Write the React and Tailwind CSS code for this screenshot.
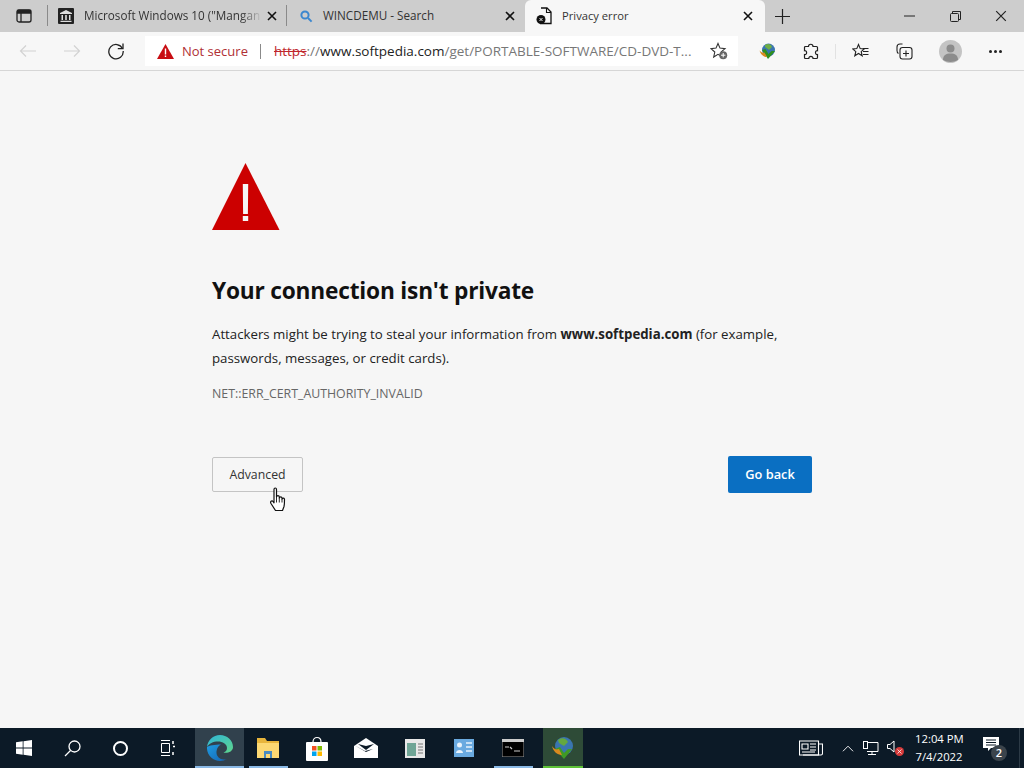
import React from "react";

const font = { fontFamily: '"Open Sans","Noto Sans",sans-serif' };

function X({ s = 10, c = "#111", w = 1.6 }) {
  return (
    <svg width={s} height={s} viewBox="0 0 10 10">
      <path d="M1 1L9 9M9 1L1 9" stroke={c} strokeWidth={w} fill="none" />
    </svg>
  );
}

function TabStrip() {
  return (
    <div className="flex h-8 bg-[#cdcdcd] shrink-0">
      <div className="w-[47px] flex items-center justify-center">
        <svg width="16" height="14" viewBox="0 0 16 14" fill="none" stroke="#222" strokeWidth="1.3">
          <rect x="1" y="1" width="14" height="12" rx="2" />
          <path d="M5 4v9" />
          <path d="M1.500 1.500h13v2.500h-13z" fill="#222" />
        </svg>
      </div>
      <div className="w-px h-[21px] bg-[#8a8a8a] mt-[5px]" />
      <div className="w-[238px] flex items-center pl-[10px] pr-[9px]">
        <svg width="16" height="16" viewBox="0 0 16 16" className="shrink-0">
          <rect width="16" height="16" rx="1" fill="#222" />
          <path d="M2 5L8 2l6 3v1H2zM3.500 7h1.500v5H3.500zM7.200 7h1.600v5H7.200zM11 7h1.500v5H11zM2.500 12.700h11v1.200h-11z" fill="#ddd" />
        </svg>
        <span className="ml-[10px] w-[178px] whitespace-nowrap text-[11.7px] text-[#333] [mask-image:linear-gradient(to_right,black_88%,transparent)]">
          Microsoft Windows 10 ("Mangan
        </span>
        <span className="ml-auto flex"><X /></span>
      </div>
      <div className="w-px h-[21px] bg-[#8a8a8a] mt-[5px]" />
      <div className="w-[238px] flex items-center pl-[11px] pr-[10px]">
        <svg width="15" height="15" viewBox="0 0 15 15" className="shrink-0 ml-[1px]" fill="none" stroke="#3b87cf" strokeWidth="2">
          <circle cx="6" cy="6" r="3.600" />
          <path d="M9 9l3.600 3.600" />
        </svg>
        <span className="ml-[9px] text-[11.7px] text-[#333] whitespace-nowrap">WINCDEMU - Search</span>
        <span className="ml-auto flex"><X /></span>
      </div>
      <div className="w-[240px] bg-[#f7f7f7] rounded-t-[6px] flex items-center pl-[11px] pr-[12px]">
        <svg width="16" height="18" viewBox="0 0 16 18" className="shrink-0">
          <path d="M5 1h6l4 4v11.500H4" fill="none" stroke="#111" strokeWidth="1.300" />
          <path d="M10.500 1v4.500H15" fill="none" stroke="#111" strokeWidth="1.100" />
          <circle cx="5" cy="12.500" r="4.500" fill="#111" />
          <path d="M3.500 11l3 3M6.500 11l-3 3" stroke="#eee" strokeWidth="1" />
        </svg>
        <span className="ml-[10px] text-[11.2px] text-[#333] whitespace-nowrap">Privacy error</span>
        <span className="ml-auto flex"><X /></span>
      </div>
      <div className="w-[34px] flex items-center justify-center">
        <svg width="15" height="15" viewBox="0 0 15 15"><path d="M7.500 0v15M0 7.500h15" stroke="#222" strokeWidth="1.200" /></svg>
      </div>
      <div className="ml-auto flex">
        <div className="w-[46px] flex items-center justify-center">
          <svg width="11" height="2" viewBox="0 0 11 2"><path d="M0 1h11" stroke="#222" strokeWidth="1" /></svg>
        </div>
        <div className="w-[46px] flex items-center justify-center">
          <svg width="11" height="11" viewBox="0 0 11 11" fill="none" stroke="#222"><rect x="0.500" y="2.500" width="8" height="8" rx="1" /><path d="M2.500 2.500V0.500h8v8H8.500" /></svg>
        </div>
        <div className="w-[46px] flex items-center justify-center">
          <X s={12} c="#222" w={1} />
        </div>
      </div>
    </div>
  );
}

function Toolbar() {
  return (
    <div className="flex items-center h-[39px] bg-[#f7f7f7] border-b border-[#d6d6d6] shrink-0">
      <div className="w-[145px] flex items-center shrink-0">
        <div className="w-[44px] flex justify-center ml-[6px]">
          <svg width="18" height="14" viewBox="0 0 18 14" fill="none" stroke="#d2d2d2" strokeWidth="1.200"><path d="M17 7H1.500M7 1.500L1.500 7 7 12.500" /></svg>
        </div>
        <div className="w-[44px] flex justify-center">
          <svg width="18" height="14" viewBox="0 0 18 14" fill="none" stroke="#d2d2d2" strokeWidth="1.200"><path d="M1 7h15.500M11 1.500L16.500 7 11 12.500" /></svg>
        </div>
        <div className="flex justify-center w-[44px]">
          <svg width="18" height="18" viewBox="0 0 18 18" fill="none" stroke="#222" strokeWidth="1.300"><path d="M15.500 6.500A7.200 7.200 0 1 0 16.200 9" /><path d="M16 1.500v5.200h-5.200" /></svg>
        </div>
      </div>
      <div className="w-[593px] h-[30px] bg-white flex items-center pl-[12px] shrink-0">
        <svg width="17" height="15" viewBox="0 0 17 15" className="shrink-0">
          <path d="M8.500 0L17 15H0z" fill="#c80d12" />
          <path d="M7.800 4.500h1.400v6H7.800zM7.800 11.400h1.400v1.500H7.800z" fill="#fff" />
        </svg>
        <span className="ml-[8px] pt-[1px] text-[13px] text-[#b03034] whitespace-nowrap">Not secure</span>
        <div className="w-px h-[15px] bg-[#8a8a8a] ml-[12px]" />
        <span className="ml-[13px] pt-[1px] text-[13.500px] whitespace-nowrap">
          <span className="text-[#c0272d] line-through">https</span>
          <span className="text-[#777]">://</span>
          <span className="text-[#222]">www.softpedia.com</span>
          <span className="text-[#777]">/get/PORTABLE-SOFTWARE/CD-DVD-T...</span>
        </span>
        <svg width="18" height="18" viewBox="0 0 18 18" className="ml-auto mr-[10px]" fill="none">
          <path d="M8 1.500l2 4.600 5 .5-3.800 3.300 1.100 4.900L8 12.300 3.700 15l1.100-5L1 6.600l5-.5z" stroke="#333" strokeWidth="1.100" />
          <circle cx="13.200" cy="13.200" r="4" fill="#666" />
          <path d="M13.200 11v4.400M11 13.200h4.400" stroke="#fff" strokeWidth="1" />
        </svg>
      </div>
      <div className="flex-1 flex items-center">
        <div className="w-[58px] flex justify-center">
          <svg width="17" height="17" viewBox="0 0 17 17">
            <circle cx="9.500" cy="7" r="6.500" fill="#3a75b0" />
            <path d="M3 7l6 9 7-8h-3.500l-3 3-3-5z" fill="#2f8f1d" />
            <path d="M6 2c3-2 6-1 7 2l-3 3-4-3z" fill="#6fae45" />
            <path d="M.5 7.500c2 2 3.500 2.500 5 2L8 14C4 14 1.500 11 .5 7.500z" fill="#d98a1f" />
          </svg>
        </div>
        <div className="w-[30px] flex justify-center">
          <svg width="16" height="17" viewBox="0 0 16 17" fill="none" stroke="#222" strokeWidth="1.200">
            <path d="M5.500 3.500C5.500.5 10 .5 10 3.500h3.500a1 1 0 0 1 1 1v3.200c-2.700-.5-2.700 4.300 0 3.800v3a1 1 0 0 1-1 1H10c.4-2.800-4.500-2.800-4.200 0H2.500a1 1 0 0 1-1-1v-3c2.800.5 2.800-4.200 0-3.800V4.500a1 1 0 0 1 1-1z" />
          </svg>
        </div>
        <div className="w-px h-[15px] bg-[#e2e2e2] ml-[9px]" />
        <div className="ml-[15px] w-[18px] flex justify-center">
          <svg width="17" height="16" viewBox="0 0 17 16" fill="none" stroke="#222" strokeWidth="1.100">
            <path d="M6.500 1.500L8.200 5.600l4 .3-3 2.700 1 4.200-3.700-2.300-3.700 2.300 1-4.200-3-2.700 4-.3z" />
            <path d="M11 5.500h5.500M11 8.500h5.500M11 11.500h5.500" />
          </svg>
        </div>
        <div className="ml-[26px] w-[18px] flex justify-center">
          <svg width="17" height="17" viewBox="0 0 17 17" fill="none" stroke="#222" strokeWidth="1.100">
            <path d="M6.500 1H4a3 3 0 0 0-3 3v3.500c0 1.500.5 2.500 1.500 3" />
            <rect x="4" y="4.500" width="12" height="11.500" rx="2.500" />
            <path d="M10 7.500v6M7 10.500h6" />
          </svg>
        </div>
        <div className="ml-[26px] w-[23px] h-[23px] rounded-full bg-[#c4c4c4] flex items-end justify-center overflow-hidden">
          <svg width="23" height="23" viewBox="0 0 23 23"><circle cx="11.500" cy="8.500" r="4" fill="#8c8c8c" /><path d="M4 20c0-5 3-6.500 7.500-6.500S19 15 19 20c-4 2.500-11 2.500-15 0z" fill="#8c8c8c" /></svg>
        </div>
        <div className="ml-[27px] flex gap-[2px]">
          <span className="w-[3px] h-[3px] rounded-full bg-[#222]" />
          <span className="w-[3px] h-[3px] rounded-full bg-[#222]" />
          <span className="w-[3px] h-[3px] rounded-full bg-[#222]" />
        </div>
      </div>
    </div>
  );
}

function ErrorPage() {
  return (
    <div className="flex-1 bg-[#f6f6f6] pl-[212px] pt-[92px]">
      <div className="w-[600px]">
        <svg width="68" height="67" viewBox="0 0 68 67" className="block">
          <path d="M33.500 0L67.500 67H0z" fill="#cc0000" />
          <path d="M30.800 21h5.400l-.3 30h-4.800zM30.800 53h5.400v5h-5.400z" fill="#f6f6f6" />
        </svg>
        <h1 className="mt-[45px] text-[22.700px] leading-[32px] font-bold text-[#111] whitespace-nowrap" style={{ letterSpacing: "-0.2px" }}>
          Your connection isn't private
        </h1>
        <p className="mt-[15px] text-[13.250px] leading-[24px] text-[#222]">
          Attackers might be trying to steal your information from <b className="font-bold">www.softpedia.com</b> (for example,
          <br />
          passwords, messages, or credit cards).
        </p>
        <p className="mt-[15px] text-[12.350px] leading-[18px] text-[#666]">NET::ERR_CERT_AUTHORITY_INVALID</p>
        <div className="mt-[53px] flex justify-between items-center">
          <div className="relative">
            <button className="block w-[91px] h-[35px] pt-[2px] border border-[#c4c4c4] rounded-[2px] bg-[#f6f6f6] text-[12.300px] text-[#333]">Advanced</button>
            <svg width="18" height="25" viewBox="0 0 18 25" className="absolute left-[57px] top-[30px]">
              <path d="M5 2.500c0-2 2.500-2 2.500 0V10c.3-1.800 2.700-1.800 2.800 0v1c.3-1.500 2.500-1.500 2.700 0v1c.4-1.300 2.500-1.200 2.500.5 0 2.500 0 5-.5 7l-1.500 4H6.500l-4.500-7c-1.200-2 .8-3.500 2-2l1 1.300z" fill="#fff" stroke="#111" strokeWidth="1.200" strokeLinejoin="round" />
              <path d="M7.500 10v5.500M10.300 11v4.500M13 12v3.500" stroke="#111" strokeWidth="0.900" fill="none" />
            </svg>
          </div>
          <button className="w-[84px] h-[37px] pt-[1px] bg-[#0a6fc2] rounded-[2px] text-[12.800px] font-semibold text-white">Go back</button>
        </div>
      </div>
    </div>
  );
}

function TaskIcon({ w = 49, bar, children, cls = "" }) {
  return (
    <div className={`relative h-full flex items-center justify-center shrink-0 ${cls}`} style={{ width: w }}>
      {children}
      {bar && <div className={`absolute bottom-0 h-[2px] ${bar}`} />}
    </div>
  );
}

function Taskbar() {
  return (
    <div className="h-10 bg-[#0c1a27] flex items-center shrink-0 text-white">
      <TaskIcon w={48}>
        <svg width="16" height="16" viewBox="0 0 16 16" fill="#fff"><path d="M0 2.300l6.700-1v6.300H0zM7.500 1.200L16 0v7.600H7.500zM0 8.400h6.700v6.300L0 13.700zM7.500 8.400H16V16l-8.500-1.200z" /></svg>
      </TaskIcon>
      <TaskIcon w={48}>
        <svg width="17" height="17" viewBox="0 0 17 17" fill="none" stroke="#fff" strokeWidth="1.300"><circle cx="10.500" cy="6.500" r="5.500" /><path d="M6.500 10.500L1 16" /></svg>
      </TaskIcon>
      <TaskIcon w={48}>
        <span className="w-[15px] h-[15px] rounded-full border-2 border-white" />
      </TaskIcon>
      <TaskIcon w={48}>
        <svg width="16" height="16" viewBox="0 0 16 16" fill="none" stroke="#fff"><path d="M1 .5h9M1 15.500h9M1.500 3.500h8v9h-8z" /><path d="M13 1v3M13 6.500h2M13 12v3" strokeWidth="1.500" /></svg>
      </TaskIcon>
      <TaskIcon w={49} cls="bg-[#31414d] ml-[3px]" bar="left-0 right-0 bg-[#8ab9e6]">
        <svg width="26" height="26" viewBox="0 0 26 26">
          <defs>
            <linearGradient id="edgeA" x1="0" y1="0" x2="1" y2="1"><stop offset="0" stopColor="#2fb4d8" /><stop offset="1" stopColor="#5fd68c" /></linearGradient>
            <linearGradient id="edgeB" x1="0" y1="0" x2="1" y2="1"><stop offset="0" stopColor="#1f9be0" /><stop offset="1" stopColor="#1464b4" /></linearGradient>
          </defs>
          <path d="M0 12C.8 5 6 0 13 0c7 0 13 5 13 12 0 5-6 6.500-9.500 5.500 2.500-1 3.500-2.500 3.500-4.500 0-4-4.500-6.500-9-6.500C6 6.500 2 8.500 0 12z" fill="url(#edgeA)" />
          <path d="M0 12c-.5 8 6 14 13 14 2.500 0 5-1 7-2-6 2-11-2-10.500-7.500.3-3.500 2.300-6 4.500-7-6 0-12 1-14 2.500z" fill="url(#edgeB)" />
        </svg>
      </TaskIcon>
      <TaskIcon w={48} bar="left-[5px] right-[4px] bg-[#8ab9e6]">
        <svg width="22" height="22" viewBox="0 0 22 22">
          <path d="M0 1h8l2 3h12v16H0z" fill="#e8b53c" />
          <path d="M0 6h22v15H0z" fill="#fcd873" />
          <path d="M7 14h8v7h-2v-4H9v4H7z" fill="#4a8ac0" />
        </svg>
      </TaskIcon>
      <TaskIcon w={49}>
        <svg width="22" height="25" viewBox="0 0 22 25">
          <path d="M7 6c0-6 8-6 8 0" fill="none" stroke="#fff" strokeWidth="1.200" />
          <rect y="6" width="22" height="19" rx="1" fill="#fff" />
          <rect x="6" y="10" width="4.500" height="4.500" fill="#f25022" />
          <rect x="11.500" y="10" width="4.500" height="4.500" fill="#7fba00" />
          <rect x="6" y="15.500" width="4.500" height="4.500" fill="#00a4ef" />
          <rect x="11.500" y="15.500" width="4.500" height="4.500" fill="#ffb900" />
        </svg>
      </TaskIcon>
      <TaskIcon w={49}>
        <svg width="24" height="20" viewBox="0 0 24 20">
          <path d="M12 0L24 8v12H0V8z" fill="#fff" />
          <path d="M0 7l12 7 7-3-8 2z" fill="#0c1a27" />
          <path d="M4 6l8 6 8-6-8 2z" fill="#0c1a27" />
        </svg>
      </TaskIcon>
      <TaskIcon w={49}>
        <svg width="20" height="19" viewBox="0 0 20 19">
          <rect width="20" height="19" fill="#e8e8e8" />
          <rect x="2" y="4" width="9" height="13" fill="#6fa596" />
          <path d="M13 5h5M13 8h5M13 11h5M13 14h5" stroke="#777" />
        </svg>
      </TaskIcon>
      <TaskIcon w={49}>
        <svg width="20" height="18" viewBox="0 0 20 18">
          <rect width="20" height="18" fill="#6aaae0" />
          <circle cx="5.500" cy="6" r="2.500" fill="#e8f2fb" />
          <path d="M2 14c0-4 7-4 7 0z" fill="#e8f2fb" />
          <path d="M12 4h6M12 8h6M12 12h6" stroke="#e8f2fb" strokeWidth="1.500" />
        </svg>
      </TaskIcon>
      <TaskIcon w={49} bar="left-[6px] right-[4px] bg-[#8ab9e6]">
        <svg width="22" height="18" viewBox="0 0 22 18">
          <rect width="22" height="18" fill="#000" stroke="#999" />
          <rect x="0" y="0" width="22" height="3" fill="#ccc" />
          <path d="M3 8h4M8 8l2 2M12 12h6" stroke="#ccc" strokeWidth="1.200" />
        </svg>
      </TaskIcon>
      <TaskIcon w={40} cls="bg-[#2e4b37] ml-[6px]" bar="left-0 right-0 bg-[#5ec238]">
        <svg width="24" height="24" viewBox="0 0 24 24">
          <circle cx="13" cy="10" r="9" fill="#3a75b0" />
          <path d="M4 13l9 10 8-10h-4l-4 4-4-6z" fill="#3f9a25" />
          <path d="M7 4c4-3 8-2 10 2l-4 4-5-3z" fill="#64a83f" />
          <path d="M1 10c2 3 4 4 7 3l3 6C6 19 2 15 1 10z" fill="#d98a1f" />
        </svg>
      </TaskIcon>

      <div className="ml-auto flex items-center h-full">
        <svg width="24" height="16" viewBox="0 0 24 16" fill="none" stroke="#fff" strokeWidth="1.100">
          <path d="M.5 1h19v14H.5z" /><path d="M19.500 4h4v9.500a1.500 1.500 0 0 1-1.500 1.500H4" /><path d="M3 4h6v5H3zM3 12h13M11 4h6M11 7h6M11 10h6" />
        </svg>
        <svg width="12" height="7" viewBox="0 0 13 7" fill="none" stroke="#fff" strokeWidth="1" className="ml-[19px]"><path d="M1 6.500L6.500 1 12 6.500" /></svg>
        <svg width="16" height="15" viewBox="0 0 16 15" fill="none" stroke="#fff" strokeWidth="1" className="ml-[9px]">
          <path d="M4 1.500h11v9H4M9 10.500v3M5 13.500h8" /><rect x=".5" y=".5" width="4" height="7" fill="#0c1a27" />
        </svg>
        <div className="relative ml-[8px] w-[16px] h-[16px]">
          <svg width="10" height="14" viewBox="0 0 10 14" fill="none" stroke="#fff" strokeWidth="1" className="absolute left-0 top-0"><path d="M.5 4.500h2.500L7 1v11L3 8.500H.5z" /></svg>
          <span className="absolute left-[8px] top-[7px] w-[9px] h-[9px] rounded-full bg-[#d63a3a] flex items-center justify-center"><X s={5} c="#fff" w={1.500} /></span>
        </div>
        <div className="ml-[12px] w-[48px] text-[11.300px] leading-[18px] text-center text-white whitespace-nowrap">
          <div>12:04 PM</div>
          <div>7/4/2022</div>
        </div>
        <div className="relative ml-[20px] w-[24px] h-[28px]">
          <svg width="16" height="15" viewBox="0 0 16 15" className="absolute left-0 top-[3px]">
            <path d="M0 0h16v11H8l-3 3v-3H0z" fill="#fff" />
            <path d="M3 3h10M3 5.500h10M3 8h10" stroke="#0c1a27" strokeWidth="1" />
          </svg>
          <span className="absolute left-[8px] top-[11px] w-[16px] h-[16px] rounded-full bg-[#3b444c] text-[11px] leading-[16px] text-center font-semibold text-white">2</span>
        </div>
        <div className="ml-[12px] w-px h-full bg-[#2c3a46] mr-[4px]" />
      </div>
    </div>
  );
}

export default function App() {
  return (
    <div className="w-[1024px] h-[768px] flex flex-col overflow-hidden" style={font}>
      <TabStrip />
      <Toolbar />
      <ErrorPage />
      <Taskbar />
    </div>
  );
}
